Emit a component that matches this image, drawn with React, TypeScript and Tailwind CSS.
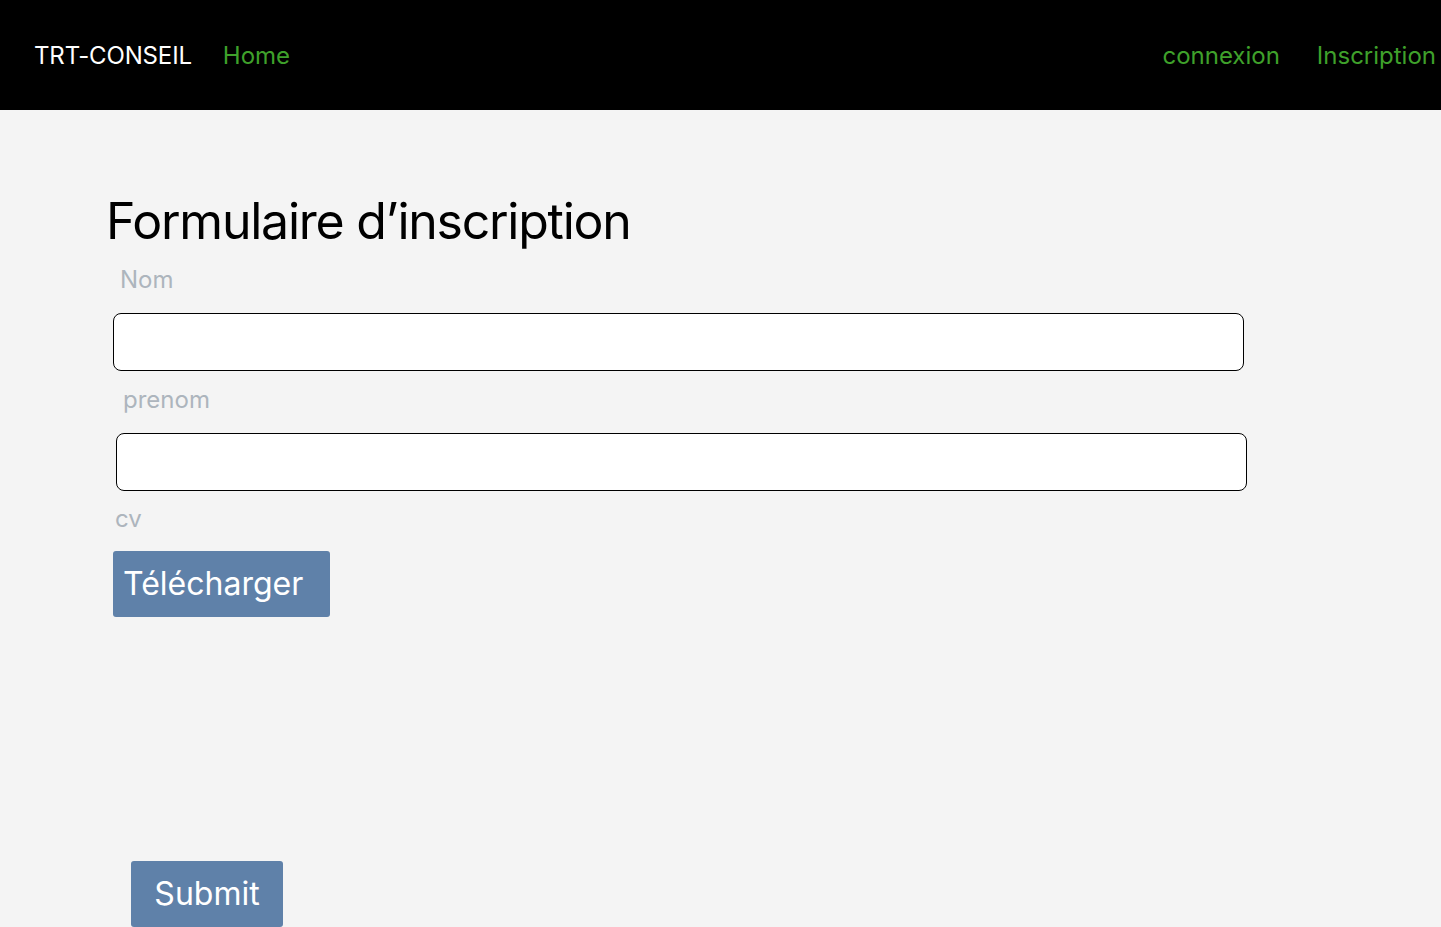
import React from 'react';

const Field = ({ label, labelClass, inputClass }: { label: string; labelClass: string; inputClass: string }) => (
  <>
    <label className={`block text-[24px] leading-[29px] text-[#adb5bd] ${labelClass}`}>{label}</label>
    <input
      type="text"
      className={`block h-[58px] w-[1131px] rounded-[8px] border border-black bg-white px-3 text-[20px] outline-none ${inputClass}`}
    />
  </>
);

export default function App() {
  return (
    <div className="min-h-[927px] bg-[#f4f4f4] font-['Inter',sans-serif]">
      <nav className="flex h-[110px] items-center bg-black pt-[2px] pl-[34px] pr-[5px] text-[24px]">
        <span className="tracking-[-0.15px] text-white">TRT-CONSEIL</span>
        <a className="ml-[31px] text-[#3fa12b]" href="#">Home</a>
        <div className="ml-auto flex gap-[37px]">
          <a className="text-[#3fa12b]" href="#">connexion</a>
          <a className="text-[#3fa12b]" href="#">Inscription</a>
        </div>
      </nav>

      <form className="pt-[81px]" onSubmit={(e) => e.preventDefault()}>
        <h1 className="ml-[106px] text-[50px] leading-[60px] tracking-[-1.25px] text-black">Formulaire d’inscription</h1>

        <Field label="Nom" labelClass="mt-[14px] ml-[120px]" inputClass="mt-[19px] ml-[113px]" />
        <Field label="prenom" labelClass="mt-[14px] ml-[123px]" inputClass="mt-[19px] ml-[116px]" />

        <label className="mt-[13px] ml-[115px] block text-[24px] leading-[29px] text-[#adb5bd]">cv</label>
        <button
          type="button"
          className="mt-[18px] ml-[113px] flex h-[66px] w-[217px] items-center rounded-[3px] bg-[#5f81a9] pl-[10px] text-[32px] text-white"
        >
          Télécharger
        </button>

        <button
          type="submit"
          className="mt-[244px] ml-[131px] flex h-[66px] w-[152px] items-center justify-center rounded-[3px] bg-[#5f81a9] text-[32px] text-white"
        >
          Submit
        </button>
      </form>
    </div>
  );
}
